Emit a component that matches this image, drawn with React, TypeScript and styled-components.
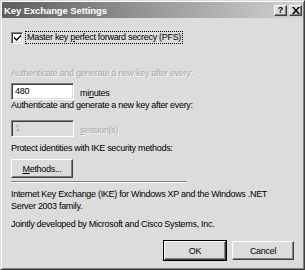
import React from "react";
import styled, { createGlobalStyle } from "styled-components";

const GlobalStyle = createGlobalStyle`
    html, body {
        margin: 0;
        padding: 0;
        background: #dcdcdc;
    }
    body {
        font-family: "Liberation Sans", Arial, sans-serif;
        font-size: 9px;
        letter-spacing: -0.3px;
        color: #000;
    }
`;

export default function App() {
    return <Window>
        <GlobalStyle />
        <TitleBar>
            <TitleText>Key Exchange Settings</TitleText>
            <TitleButtons>
                <CaptionButton aria-label="Help">
                    <HelpGlyph>?</HelpGlyph>
                </CaptionButton>
                <CaptionButton aria-label="Close">
                    <svg width="8" height="7" viewBox="0 0 8 7">
                        <path d="M0 0h2l2 2.5L6 0h2L5 3.5 8 7H6L4 4.5 2 7H0l3-3.5z" fill="#000" />
                    </svg>
                </CaptionButton>
            </TitleButtons>
        </TitleBar>

        <Body>
            <CheckRow>
                <CheckBox>
                    <svg width="7" height="7" viewBox="0 0 7 7">
                        <path d="M0 2.5l2.5 2.5L7 0.5v2L2.5 7 0 4.5z" fill="#000" />
                    </svg>
                </CheckBox>
                <FocusLabel>Master key <u>p</u>erfect forward secrecy (PFS)</FocusLabel>
            </CheckRow>

            <Label $disabled $top={24}>Authenticate and generate a new key after every:</Label>
            <FieldRow $top={4}>
                <TextBox>480</TextBox>
                <Unit>mi<u>n</u>utes</Unit>
            </FieldRow>

            <Label $top={0}>Authenticate and generate a new key after every:</Label>
            <FieldRow $top={9}>
                <TextBox $disabled>1</TextBox>
                <Unit $disabled><u>s</u>ession(s)</Unit>
            </FieldRow>

            <Label $top={6}>Protect identities with IKE security methods:</Label>
            <Button $top={5}><u>M</u>ethods...</Button>

            <Separator />

            <Paragraph $top={5}>
                Internet Key Exchange (IKE) for Windows XP and the Windows .NET<br />
                Server 2003 family.
            </Paragraph>
            <Paragraph $top={6}>Jointly developed by Microsoft and Cisco Systems, Inc.</Paragraph>

            <ButtonRow>
                <DefaultFrame>
                    <Button $top={0}>OK</Button>
                </DefaultFrame>
                <Button $top={0}>Cancel</Button>
            </ButtonRow>
        </Body>
    </Window>;
}

const Window = styled.div`
    width: 305px;
    height: 270px;
    box-sizing: border-box;
    padding: 1px;
    background: #dcdcdc;
    border: 1px solid;
    border-color: #dcdcdc #404040 #404040 #dcdcdc;
    box-shadow: inset 1px 1px #ffffff, inset -1px -1px #808080;
    display: flex;
    flex-direction: column;
    overflow: hidden;
`;

const TitleBar = styled.div`
    height: 16px;
    flex-shrink: 0;
    display: flex;
    align-items: center;
    justify-content: space-between;
    padding: 0 1px 0 2px;
    background: linear-gradient(to right, #5e5e5e, #d2d2d2);
`;

const TitleText = styled.span`
    color: #ffffff;
    font-weight: bold;
    font-size: 9.5px;
    letter-spacing: -0.1px;
`;

const TitleButtons = styled.div`
    display: flex;
    gap: 2px;
`;

const CaptionButton = styled.div`
    width: 13px;
    height: 11px;
    box-sizing: border-box;
    background: #dcdcdc;
    border: 1px solid;
    border-color: #ffffff #404040 #404040 #ffffff;
    box-shadow: inset -1px -1px #808080;
    display: flex;
    align-items: center;
    justify-content: center;
`;

const HelpGlyph = styled.span`
    font-weight: bold;
    font-size: 9px;
    line-height: 9px;
    letter-spacing: 0;
`;

const Body = styled.div`
    flex: 1;
    display: flex;
    flex-direction: column;
    align-items: flex-start;
    padding: 0 9px;
    white-space: nowrap;
`;

const CheckRow = styled.div`
    margin-top: 13px;
    display: flex;
    align-items: center;
    height: 13px;
`;

const CheckBox = styled.div`
    width: 12px;
    height: 12px;
    box-sizing: border-box;
    background: #ffffff;
    border: 1px solid;
    border-color: #808080 #ffffff #ffffff #808080;
    box-shadow: inset 1px 1px #404040, inset -1px -1px #dcdcdc;
    display: flex;
    align-items: center;
    justify-content: center;
`;

const FocusLabel = styled.span`
    margin-left: 2px;
    padding: 0 1px;
    line-height: 11px;
    border: 1px dotted #000;
`;

const Label = styled.div<{ $disabled?: boolean; $top: number }>`
    margin-top: ${p => p.$top}px;
    line-height: 11px;
    color: ${p => (p.$disabled ? "#a9a9a9" : "#000")};
    text-shadow: ${p => (p.$disabled ? "1px 1px #f4f4f4" : "none")};
`;

const FieldRow = styled.div<{ $top: number }>`
    margin-top: ${p => p.$top}px;
    display: flex;
    align-items: flex-end;
`;

const TextBox = styled.div<{ $disabled?: boolean }>`
    width: 63px;
    height: 17px;
    box-sizing: border-box;
    padding: 1px 3px;
    line-height: 13px;
    background: ${p => (p.$disabled ? "#dcdcdc" : "#ffffff")};
    color: ${p => (p.$disabled ? "#a9a9a9" : "#000")};
    border: 1px solid;
    border-color: #808080 #ffffff #ffffff #808080;
    box-shadow: inset 1px 1px #404040, inset -1px -1px #dcdcdc;
`;

const Unit = styled.span<{ $disabled?: boolean }>`
    margin-left: 6px;
    line-height: 13px;
    color: ${p => (p.$disabled ? "#a9a9a9" : "#000")};
    text-shadow: ${p => (p.$disabled ? "1px 1px #f4f4f4" : "none")};
`;

const Button = styled.div<{ $top: number }>`
    margin-top: ${p => p.$top}px;
    width: 62px;
    height: 19px;
    box-sizing: border-box;
    background: #dcdcdc;
    border: 1px solid;
    border-color: #ffffff #404040 #404040 #ffffff;
    box-shadow: inset -1px -1px #808080;
    display: flex;
    align-items: center;
    justify-content: center;
`;

const DefaultFrame = styled.div`
    border: 1px solid #000;
    display: flex;
`;

const Separator = styled.div`
    margin-top: 3px;
    width: 176px;
    height: 0;
    border-top: 1px solid #808080;
    border-bottom: 1px solid #ffffff;
`;

const Paragraph = styled.div<{ $top: number }>`
    margin-top: ${p => p.$top}px;
    line-height: 12px;
`;

const ButtonRow = styled.div`
    margin-top: 10px;
    align-self: flex-end;
    display: flex;
    align-items: center;
    gap: 5px;
`;
